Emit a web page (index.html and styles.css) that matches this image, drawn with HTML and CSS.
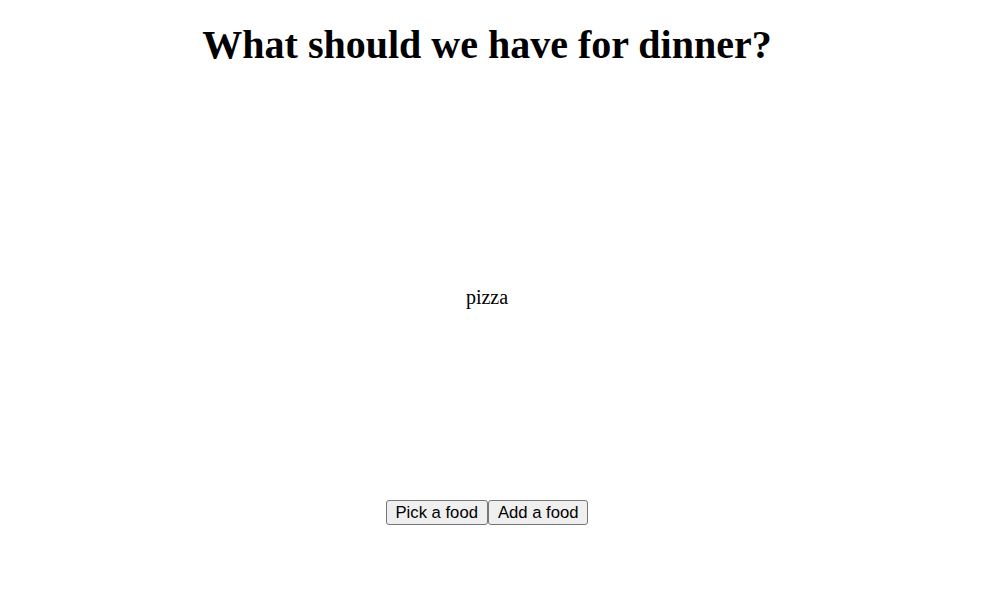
FILE: index.html
```html
<!DOCTYPE html>
<html lang="en">
<head>
<meta charset="utf-8">
<title>Dinner picker</title>
<link rel="stylesheet" href="styles.css">
</head>
<body>
<main class="app">
  <h1 class="title">What should we have for dinner?</h1>
  <p class="dish">pizza</p>
  <div class="actions"><button class="btn" type="button">Pick a food</button><button class="btn" type="button">Add a food</button></div>
</main>
</body>
</html>
```

FILE: styles.css
```css
html, body {
  margin: 0;
  padding: 0;
  background: #ffffff;
}

body {
  font-family: "Liberation Serif", "Times New Roman", serif;
  color: #000000;
}

.app {
  width: 974px;
  display: flex;
  flex-direction: column;
  align-items: center;
}

.title {
  margin: 22px 0 0;
  font-size: 40px;
  font-weight: bold;
  line-height: 46px;
}

.dish {
  margin: 218px 0 0;
  font-size: 20px;
  line-height: 23px;
}

.actions {
  margin-top: 191px;
  display: flex;
}

.btn {
  font-family: "Liberation Sans", Arial, sans-serif;
  font-size: 16.67px;
  line-height: 19px;
  padding: 2px 9px;
  margin: 0;
  border: 1px solid #767676;
  border-radius: 3px;
  background: #efefef;
  color: #000000;
}
```
